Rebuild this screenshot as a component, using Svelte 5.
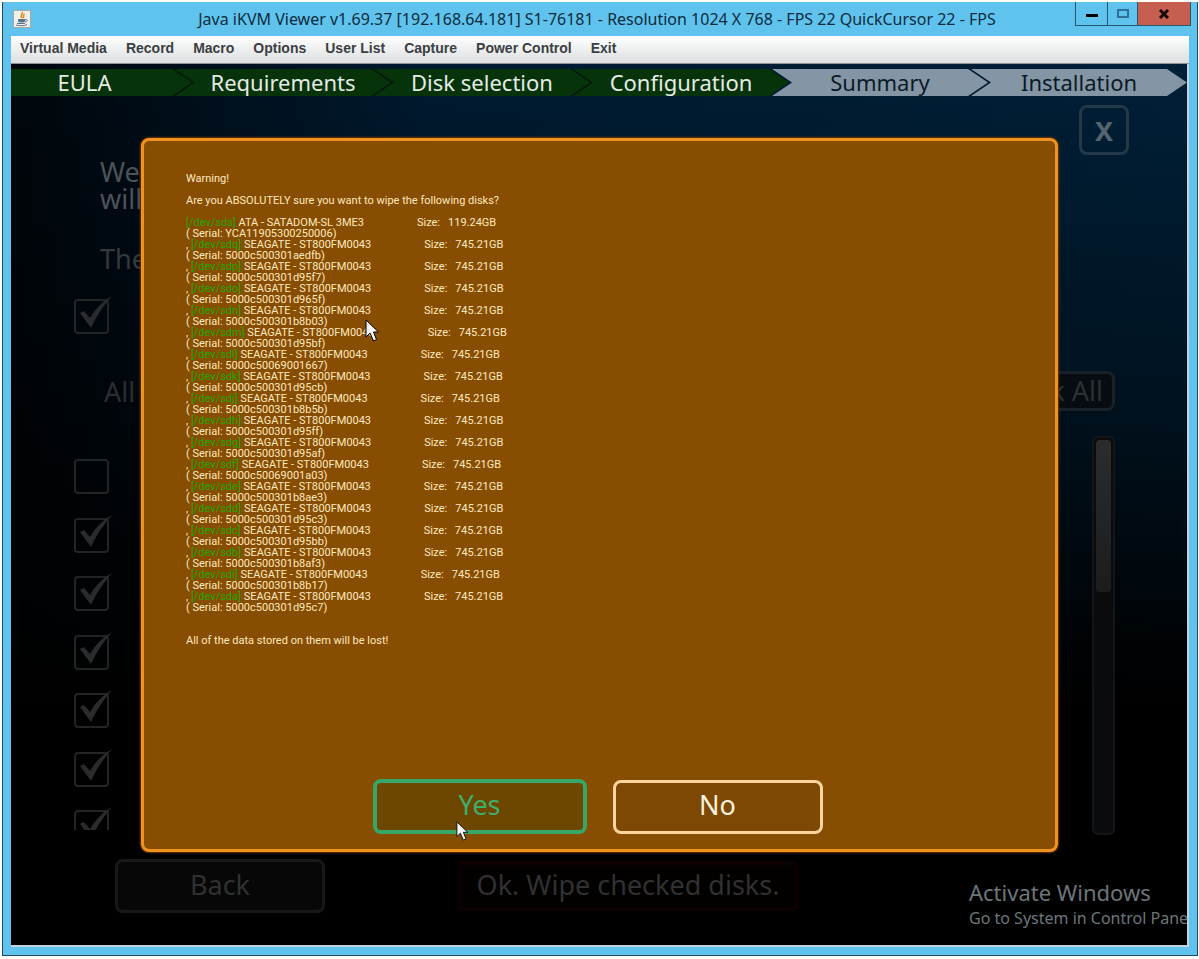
<script>
  const menus = ['Virtual Media', 'Record', 'Macro', 'Options', 'User List', 'Capture', 'Power Control', 'Exit'];

  const steps = [
    { name: 'EULA', done: true },
    { name: 'Requirements', done: true },
    { name: 'Disk selection', done: true },
    { name: 'Configuration', done: true },
    { name: 'Summary', done: false },
    { name: 'Installation', done: false }
  ];

  const seagate = (dev, serial) => ({ dev, serial, model: 'SEAGATE - ST800FM0043', size: '745.21GB' });

  const disks = [
    { dev: 'sds', serial: 'YCA11905300250006', model: 'ATA - SATADOM-SL 3ME3', size: '119.24GB' },
    seagate('sdq', '5000c500301aedfb'),
    seagate('sdp', '5000c500301d95f7'),
    seagate('sdo', '5000c500301d965f'),
    seagate('sdn', '5000c500301b8b03'),
    seagate('sdm', '5000c500301d95bf'),
    seagate('sdl', '5000c50069001667'),
    seagate('sdk', '5000c500301d95cb'),
    seagate('sdj', '5000c500301b8b5b'),
    seagate('sdh', '5000c500301d95ff'),
    seagate('sdg', '5000c500301d95af'),
    seagate('sdf', '5000c50069001a03'),
    seagate('sde', '5000c500301b8ae3'),
    seagate('sdd', '5000c500301d95c3'),
    seagate('sdc', '5000c500301d95bb'),
    seagate('sdb', '5000c500301b8af3'),
    seagate('sdi', '5000c500301b8b17'),
    seagate('sda', '5000c500301d95c7')
  ];

  let checks = $state([false, true, true, true, true, true, true]);
  let wipeAll = $state(true);
</script>

{#snippet tick()}
  <svg class="tick" viewBox="0 0 40 40" aria-hidden="true">
    <path d="M6 18 L10 16 L16 23 C22 13 29 6 38 1 C30 10 23 20 17 33 Z" fill="currentColor" />
  </svg>
{/snippet}

{#snippet pointer()}
  <svg viewBox="0 0 14 23" aria-hidden="true">
    <path d="M1 1 V18 L5 14 L8.500 22 L11.500 20.500 L8.500 13 H13.500 Z" fill="#f4f4f4" stroke="#000" stroke-width="1" />
  </svg>
{/snippet}

<div class="window">
  <header class="titlebar">
    <svg class="java" viewBox="0 0 18 18" aria-hidden="true">
      <rect x="0" y="0" width="18" height="18" fill="#a9a9a2" />
      <rect x="1" y="1" width="16" height="16" fill="#f1f0ea" />
      <path d="M9 2 C11 4 6 5 9 8 M11.500 4 C9 6 12 6 10 8" fill="none" stroke="#e0881c" stroke-width="1.500" />
      <path d="M5 9 H12 V11 C12 13 5 13 5 11 Z" fill="#5d7389" />
      <path d="M12 9.500 C15 9 15 12 12 12 M4 13.500 H12 M3 15 C6 16 12 16 14 14.500" fill="none" stroke="#5d7389" />
    </svg>
    <h1>Java iKVM Viewer v1.69.37 [192.168.64.181] S1-76181 - Resolution 1024 X 768 - FPS 22 QuickCursor 22 - FPS</h1>
    <div class="controls">
      <button class="min" aria-label="Minimize">
        <svg viewBox="0 0 12 10"><rect x="0" y="5" width="12" height="3" fill="#000" /></svg>
      </button>
      <button class="max" aria-label="Maximize">
        <svg viewBox="0 0 12 10"><rect x="1" y="1" width="10" height="7" fill="none" stroke="#2f6f98" stroke-width="2" /></svg>
      </button>
      <button class="quit" aria-label="Close">
        <svg viewBox="0 0 12 10"><path d="M2 1 L10 9 M10 1 L2 9" stroke="#180a08" stroke-width="3" /></svg>
      </button>
    </div>
  </header>

  <nav class="menubar">
    {#each menus as menu}
      <button>{menu}</button>
    {/each}
  </nav>

  <div class="screen">
    <ol class="steps">
      {#each steps as step}
        <li class:done={step.done}>{step.name}</li>
      {/each}
    </ol>

    <main class="page">
      <div class="top">
        <button class="close">X</button>
      </div>
      <p class="intro">We<br />will</p>
      <p class="intro second">The</p>
      <label class="check wipe">
        <input type="checkbox" bind:checked={wipeAll} aria-label="Wipe disks" />
        {#if wipeAll}{@render tick()}{/if}
      </label>

      <div class="filter">
        <span>All</span>
        <button>Check All</button>
      </div>

      <div class="disks">
        <div class="viewport">
          <ul>
            {#each checks as checked, i}
              <li>
                <label class="check">
                  <input type="checkbox" bind:checked={checks[i]} aria-label="Disk {i + 1}" />
                  {#if checked}{@render tick()}{/if}
                </label>
              </li>
            {/each}
          </ul>
        </div>
        <div class="scrollbar"><div class="thumb"></div></div>
      </div>

      <footer>
        <button class="back">Back</button>
        <button class="ok">Ok. Wipe checked disks.</button>
      </footer>
    </main>

    <div class="dialog" role="alertdialog" aria-label="Warning">
      <div class="message">
        <p>Warning!</p>
        <p>Are you ABSOLUTELY sure you want to wipe the following disks?</p>
        <ul>
          {#each disks as disk, i}
            <li>
              {i ? ', ' : ''}<span class="dev">[/dev/{disk.dev}]</span> {disk.model}<span class="label">Size:</span><span>{disk.size}</span>
              <br />( Serial: {disk.serial})
            </li>
          {/each}
        </ul>
        <p class="lost">All of the data stored on them will be lost!</p>
      </div>
      <div class="actions">
        <button class="yes">Yes</button>
        <button class="no">No</button>
      </div>
      <div class="pointer remote">{@render pointer()}</div>
      <div class="pointer local">{@render pointer()}</div>
    </div>

    <div class="activate">
      <strong>Activate Windows</strong>
      <span>Go to System in Control Pane</span>
    </div>
  </div>
</div>

<style>
  :global(body) {
    background: #fff;
  }

  * {
    box-sizing: border-box;
  }

  button {
    margin: 0;
    padding: 0;
    border: 0;
    background: none;
    font: inherit;
    color: inherit;
  }

  p, ul, ol, h1 {
    margin: 0;
    padding: 0;
    list-style: none;
  }

  .window {
    display: flex;
    flex-direction: column;
    min-height: calc(100vh - 5px);
    margin: 2px 1px 3px 2px;
    padding: 0 8px;
    border: 1px solid #1f4a60;
    border-top: 0;
    background: #5fc3ee;
  }

  /* title bar */
  .titlebar {
    display: grid;
    grid-template-columns: 1fr auto 1fr;
    align-items: start;
    height: 34px;
    padding-left: 2px;
  }

  .java {
    width: 18px;
    height: 18px;
    margin-top: 8px;
  }

  h1 {
    padding-right: 8px;
    font: 400 16px/34px "Noto Sans", sans-serif;
    color: #0d2b3c;
    white-space: nowrap;
  }

  .controls {
    display: flex;
    justify-self: end;
    height: 24px;
    border: 1px solid #23566f;
    border-top: 0;
    margin-right: -2px;
  }

  .controls button {
    display: grid;
    place-items: center;
    width: 32px;
    border-right: 1px solid #23566f;
  }

  .controls .max {
    width: 30px;
  }

  .controls .quit {
    width: 52px;
    border-right: 0;
    background: #c75f50;
  }

  .controls svg {
    width: 12px;
    height: 10px;
  }

  /* menu */
  .menubar {
    display: flex;
    align-items: flex-start;
    gap: 19px;
    height: 28px;
    padding-left: 9px;
    border-bottom: 1px solid #8d9295;
    background: linear-gradient(#fff, #dcdfe0);
    font: 700 14px/24px "Liberation Sans", Arial, sans-serif;
    color: #3b3f42;
  }

  /* remote screen */
  .screen {
    position: relative;
    flex: 1;
    display: flex;
    flex-direction: column;
    margin-bottom: 8px;
    border-right: 2px solid #c3d3e0;
    border-bottom: 2px solid #c3d3e0;
    background:
      linear-gradient(180deg, transparent 0, rgba(0, 0, 0, 0.400) 35%, #000 72%),
      linear-gradient(90deg, #00060b 0, #001a30 35%, #002038 100%);
    font-family: "Noto Sans", sans-serif;
  }

  .steps {
    display: flex;
    margin-top: 5px;
    background: linear-gradient(90deg, #031a0c 62%, transparent 62%);
  }

  .steps li {
    position: relative;
    z-index: 0;
    flex: 216;
    margin-left: -17px;
    height: 27px;
    text-align: center;
    font-size: 22px;
    line-height: 26px;
    color: #0c1a26;
  }

  .steps li::before {
    content: "";
    position: absolute;
    inset: 0;
    z-index: -1;
    background: #8496a5;
    clip-path: polygon(0 0, calc(100% - 20px) 0, 100% 50%, calc(100% - 20px) 100%, 0 100%, 20px 50%);
  }

  .steps li:first-child {
    flex: 147;
    margin-left: 0;
    padding-right: 34px;
  }

  .steps li:first-child::before {
    clip-path: polygon(0 0, calc(100% - 20px) 0, 100% 50%, calc(100% - 20px) 100%, 0 100%);
  }

  .steps .done {
    color: #e3ebe3;
  }

  .steps .done::before {
    background: #07330b;
  }

  .page {
    flex: 1;
    display: flex;
    flex-direction: column;
    padding: 9px 58px 32px 63px;
    font-size: 27px;
    line-height: 27px;
  }

  .top {
    display: flex;
    justify-content: flex-end;
  }

  .close {
    width: 50px;
    height: 50px;
    border: 3px solid #233947;
    border-radius: 8px;
    font-weight: 700;
    color: #56646e;
  }

  .intro {
    margin: 3px 0 0 26px;
    color: #4b5359;
  }

  .second {
    margin-top: 33px;
    color: #33393d;
  }

  .check {
    position: relative;
    display: block;
    width: 35px;
    height: 35px;
    color: #292b2c;
  }

  .check input {
    appearance: none;
    display: block;
    width: 35px;
    height: 35px;
    margin: 0;
    border: 2px solid #222425;
    border-radius: 4px;
  }

  .tick {
    position: absolute;
    left: 0;
    top: -4px;
    width: 40px;
    height: 40px;
  }

  .wipe {
    margin-top: 27px;
  }

  .filter {
    display: flex;
    justify-content: space-between;
    align-items: center;
    margin: 37px 14px 0 30px;
    color: #2b2e30;
  }

  .filter button {
    width: 150px;
    height: 40px;
    padding-right: 9px;
    border: 3px solid #182127;
    border-radius: 8px;
    background: #060c11;
    text-align: right;
    line-height: 32px;
    color: #2b3033;
  }

  .disks {
    flex: 1;
    display: flex;
    justify-content: space-between;
    margin: 25px 14px 24px 0;
  }

  .viewport {
    height: 375px;
    margin-top: 19px;
    padding-top: 4px;
    padding-right: 5px;
    overflow: hidden;
  }

  .viewport ul {
    display: grid;
    grid-auto-rows: 1fr;
    height: 410px;
  }

  .scrollbar {
    width: 23px;
    padding: 2px 2px 0;
    border: 2px solid #131516;
    border-radius: 6px;
    background: #0a0b0c;
  }

  .thumb {
    height: 152px;
    border-radius: 4px;
    background: linear-gradient(#2a2c2e, #1b1c1d);
  }

  footer {
    display: flex;
    align-items: center;
    gap: 133px;
    padding-left: 41px;
    color: #303132;
  }

  footer button,
  .actions button {
    padding-bottom: 4px;
  }

  .back {
    width: 210px;
    height: 54px;
    border: 3px solid #171819;
    border-radius: 8px;
    background: #070707;
  }

  .ok {
    width: 340px;
    height: 50px;
    border: 4px solid #0d0000;
    border-radius: 4px;
    background: #030000;
  }

  /* wipe confirmation, lies over the installer page */
  .dialog {
    position: absolute;
    inset: 74px 129px 93px 130px;
    display: flex;
    flex-direction: column;
    justify-content: space-between;
    padding: 32px 46px 15px 42px;
    border: 3px solid #f0921f;
    border-radius: 8px;
    background: #874d00;
    box-shadow: 0 0 2px 1px #6b3600;
  }

  .message {
    font: 400 11px/11px Roboto, sans-serif;
    color: #ffe9c0;
    white-space: nowrap;
  }

  .message p {
    margin-bottom: 11px;
  }

  .message .lost {
    margin: 22px 0 0;
  }

  .dev {
    color: #1da806;
  }

  .label {
    margin: 0 8px 0 53px;
  }

  .actions {
    display: flex;
    justify-content: center;
    align-items: center;
    gap: 26px;
    font-size: 27px;
    line-height: 27px;
  }

  .yes {
    width: 214px;
    height: 55px;
    border: 4px solid #37a768;
    border-radius: 8px;
    background: #6d4600;
    color: #3fae6c;
  }

  .no {
    width: 210px;
    height: 54px;
    border: 3px solid #fbd4a0;
    border-radius: 8px;
    background: #7c4804;
    color: #fff1dc;
  }

  .pointer {
    position: absolute;
    width: 14px;
    height: 23px;
  }

  .pointer svg {
    display: block;
    height: 100%;
  }

  .remote {
    left: 221px;
    top: 178px;
  }

  .local {
    left: 312px;
    bottom: 8px;
    height: 20px;
  }

  .activate {
    position: absolute;
    right: -3px;
    bottom: 15px;
    display: flex;
    flex-direction: column;
    width: 221px;
    font-size: 16px;
    line-height: 24px;
    white-space: nowrap;
    color: #6d767a;
  }

  .activate strong {
    font-size: 22px;
    font-weight: 400;
    line-height: 28px;
  }
</style>
